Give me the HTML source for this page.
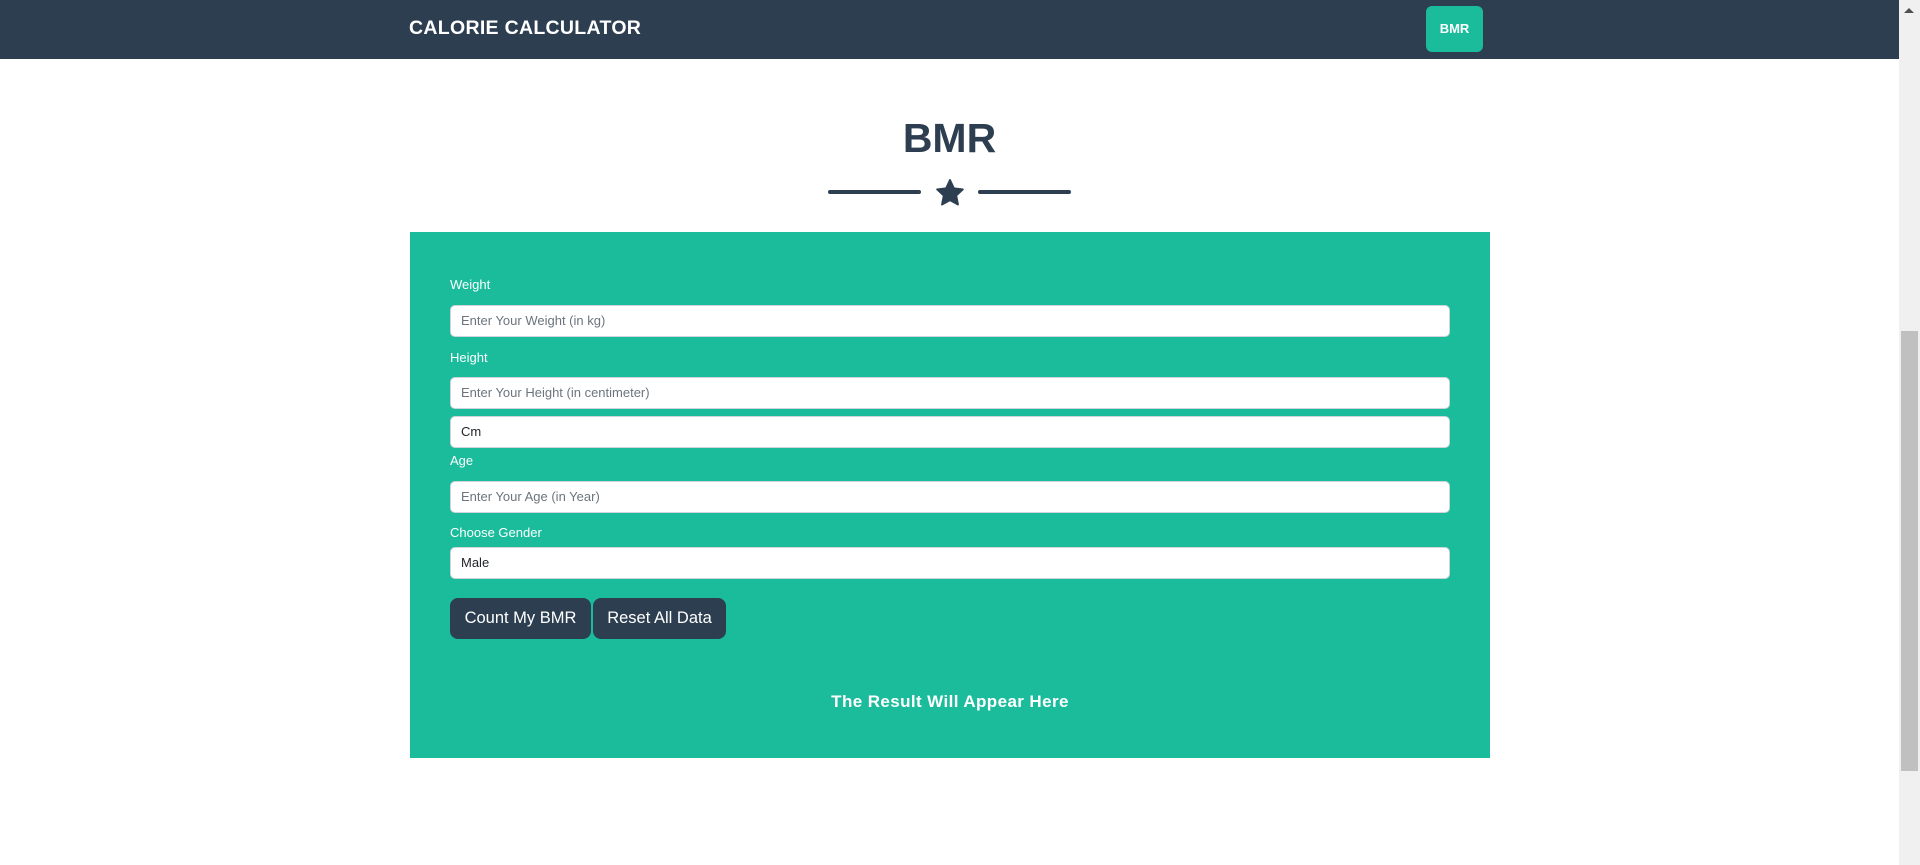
<!DOCTYPE html>
<html><head><meta charset="utf-8"><style>
*{box-sizing:border-box;margin:0;padding:0}
html,body{width:1920px;height:865px;overflow:hidden;background:#fff;font-family:"Liberation Sans",sans-serif}
.nav{position:absolute;left:0;top:0;width:1899px;height:59px;background:#2c3e50}
.brand{position:absolute;left:409px;top:17px;color:#fff;font-weight:bold;font-size:19.5px;letter-spacing:0.3px}
.nbtn{position:absolute;left:1426px;top:6px;width:57px;height:46px;background:#1abc9c;border-radius:6px;color:#fff;font-weight:bold;font-size:13px;text-align:center;line-height:46px}
h1{position:absolute;left:0;width:1899px;top:114px;text-align:center;color:#2c3e50;font-size:41px;font-weight:bold;line-height:48px}
.line{position:absolute;top:190px;height:4px;width:93px;background:#2c3e50;border-radius:2px}
.card{position:absolute;left:410px;top:232px;width:1080px;height:526px;background:#1abc9c}
.lbl{position:absolute;left:40px;color:#fff;font-size:13px}
.inp{position:absolute;left:40px;width:1000px;height:32px;background:#fff;border:1px solid #ced4da;border-radius:5px;font-size:13px;line-height:30px;padding-left:10px;color:#6c757d}
.inp.v{color:#212529}
.btn{position:absolute;top:366px;height:41px;background:#2c3e50;color:#fff;border-radius:8px;font-size:16.5px;line-height:41px;text-align:center}
.res{position:absolute;left:0;width:1080px;top:460px;text-align:center;color:#fff;font-weight:bold;font-size:17px;letter-spacing:0.4px}
.sb{position:absolute;left:1899px;top:0;width:21px;height:865px;background:#f0f0f0}
.thumb{position:absolute;left:2px;top:331px;width:17px;height:440px;background:#c0c0c0}
</style></head><body>
<div class="nav"><div class="brand">CALORIE CALCULATOR</div><div class="nbtn">BMR</div></div>
<h1>BMR</h1>
<div class="line" style="left:828px"></div>
<svg style="position:absolute;left:935px;top:178px" width="30" height="29" viewBox="0 0 24 23"><path d="M12 1.5l3.1 6.6 7.2.9-5.3 5 1.4 7.1L12 17.6l-6.4 3.5L7 14l-5.3-5 7.2-.9z" fill="#2c3e50" stroke="#2c3e50" stroke-width="1.5" stroke-linejoin="round"/></svg>
<div class="line" style="left:978px"></div>
<div class="card">
<div class="lbl" style="top:45px">Weight</div>
<div class="inp" style="top:73px">Enter Your Weight (in kg)</div>
<div class="lbl" style="top:118px">Height</div>
<div class="inp" style="top:145px">Enter Your Height (in centimeter)</div>
<div class="inp v" style="top:184px">Cm</div>
<div class="lbl" style="top:221px">Age</div>
<div class="inp" style="top:249px">Enter Your Age (in Year)</div>
<div class="lbl" style="top:293px">Choose Gender</div>
<div class="inp v" style="top:315px">Male</div>
<div class="btn" style="left:40px;width:141px">Count My BMR</div>
<div class="btn" style="left:183px;width:133px">Reset All Data</div>
<div class="res">The Result Will Appear Here</div>
</div>
<div class="sb"><div class="thumb"></div><div style="position:absolute;left:5px;top:8px;width:0;height:0;border-left:5px solid transparent;border-right:5px solid transparent;border-bottom:5px solid #505050"></div></div>
</body></html>
